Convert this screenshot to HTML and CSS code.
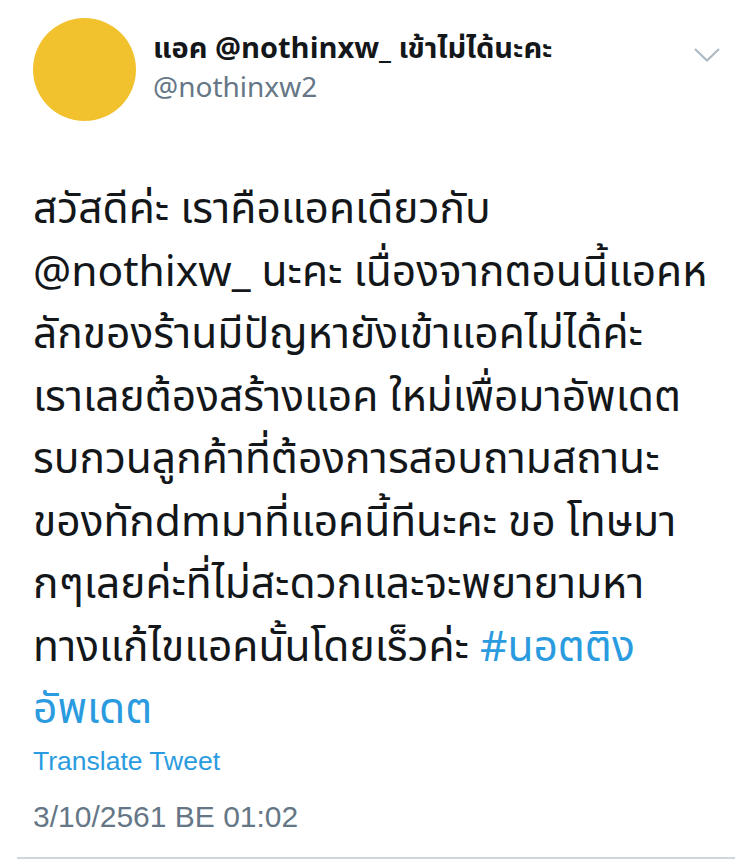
FILE: index.html
```html
<!DOCTYPE html>
<html lang="th">
<head>
<meta charset="utf-8">
<link rel="stylesheet" href="styles.css">
</head>
<body>
<article class="tweet">
  <header class="head">
    <div class="avatar"></div>
    <div class="names">
      <div class="name">แอค @nothinxw_ เข้าไม่ได้นะคะ</div>
      <div class="handle">@nothinxw2</div>
    </div>
    <svg class="chev" width="26" height="14" viewBox="0 0 26 14"><path d="M1 1 L13 12.5 L25 1" fill="none" stroke="#aab8c2" stroke-width="2"/></svg>
  </header>
  <p class="text">สวัสดีค่ะ เราคือแอคเดียวกับ<br>@nothixw_ นะคะ เนื่องจากตอนนี้แอคห<br>ลักของร้านมีปัญหายังเข้าแอคไม่ได้ค่ะ<br>เราเลยต้องสร้างแอค ใหม่เพื่อมาอัพเดต<br>รบกวนลูกค้าที่ต้องการสอบถามสถานะ<br>ของทักdmมาที่แอคนี้ทีนะคะ ขอ โทษมา<br>กๆเลยค่ะที่ไม่สะดวกและจะพยายามหา<br>ทางแก้ไขแอคนั้นโดยเร็วค่ะ <a class="tag">#นอตติง<br>อัพเดต</a></p>
  <a class="translate">Translate Tweet</a>
  <div class="time">3/10/2561 BE 01:02</div>
</article>
</body>
</html>
```
FILE: styles.css
```css
html, body { margin: 0; padding: 0; background: #fff; }
body { font-family: "Noto Sans Thai", "Noto Sans", "Liberation Sans", sans-serif; color: #14171a; }
.tweet { width: 750px; height: 860px; box-sizing: border-box; padding: 18px 16px 0 33px; position: relative; }
.tweet::after { content: ""; position: absolute; left: 17px; right: 15px; bottom: 1px; height: 2px; background: #ccd6dd; }
.head { display: flex; align-items: flex-start; }
.avatar { width: 103px; height: 103px; border-radius: 50%; background: #f2c12e; flex: none; }
.names { margin-left: 17px; padding-top: 13px; flex: 1; }
.name { font-size: 29px; font-weight: 700; line-height: 36px; color: #14171a; white-space: nowrap; }
.handle { margin-top: 4px; font-size: 28px; line-height: 36px; color: #657786; }
.chev { margin-top: 30px; margin-right: 14px; }
.text { margin: 58px 0 0; font-size: 42.5px; line-height: 62.5px; color: #14171a; white-space: nowrap; }
.tag { color: #2b9be0; }
.translate { display: block; margin-top: 4px; font-size: 26.5px; line-height: 30px; color: #2b9be0; font-family: "Liberation Sans", sans-serif; }
.time { margin-top: 24px; font-size: 30px; line-height: 34px; color: #657786; font-family: "Liberation Sans", sans-serif; }
```
